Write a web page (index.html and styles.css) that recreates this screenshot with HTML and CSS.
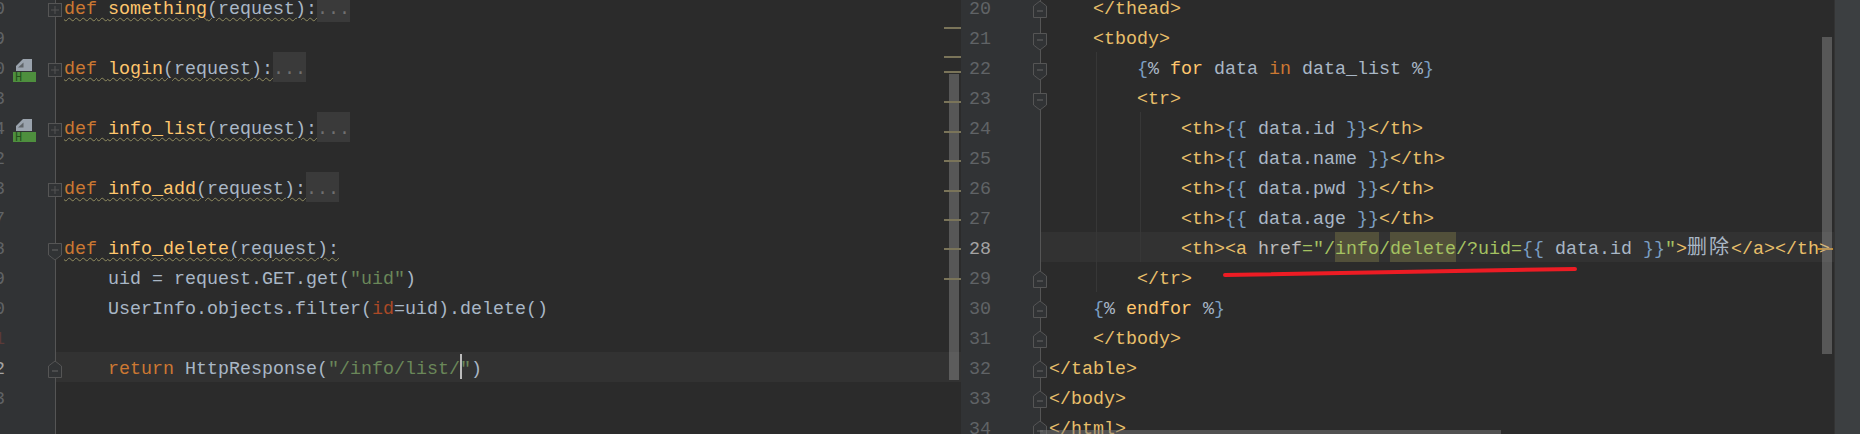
FILE: index.html
```html
<!DOCTYPE html>
<html lang="en">
<head>
<meta charset="utf-8">
<title>Editor</title>
<link rel="stylesheet" href="styles.css">
</head>
<body>
<div class="ide">
  <section class="pane pane-left">
    <div class="lines">
      <div class="row"><div class="gutter"><span class="num">0</span><svg class="fold fold-plus"><use href="#f-plus"/></svg></div><div class="code"><span class="warn"><i class="k">def</i> <i class="f">something</i>(request):</span><span class="dots">...</span></div></div>
      <div class="row"><div class="gutter"><span class="num">9</span></div><div class="code"></div></div>
      <div class="row"><div class="gutter"><span class="num">0</span><svg class="mark" viewBox="0 0 16 12"><path d="M7 0H16V12H0V7Z" fill="#9aa3ad"/><path d="M2 8.5L7.5 3.5V8.5Z" fill="#5f6468"/></svg><span class="badge">H</span><svg class="fold fold-plus"><use href="#f-plus"/></svg></div><div class="code"><span class="warn"><i class="k">def</i> <i class="f">login</i>(request):</span><span class="dots">...</span></div></div>
      <div class="row"><div class="gutter"><span class="num">3</span></div><div class="code"></div></div>
      <div class="row"><div class="gutter"><span class="num">4</span><svg class="mark" viewBox="0 0 16 12"><path d="M7 0H16V12H0V7Z" fill="#9aa3ad"/><path d="M2 8.5L7.5 3.5V8.5Z" fill="#5f6468"/></svg><span class="badge">H</span><svg class="fold fold-plus"><use href="#f-plus"/></svg></div><div class="code"><span class="warn"><i class="k">def</i> <i class="f">info_list</i>(request):</span><span class="dots">...</span></div></div>
      <div class="row"><div class="gutter"><span class="num">2</span></div><div class="code"></div></div>
      <div class="row"><div class="gutter"><span class="num">3</span><svg class="fold fold-plus"><use href="#f-plus"/></svg></div><div class="code"><span class="warn"><i class="k">def</i> <i class="f">info_add</i>(request):</span><span class="dots">...</span></div></div>
      <div class="row"><div class="gutter"><span class="num">7</span></div><div class="code"></div></div>
      <div class="row"><div class="gutter"><span class="num">8</span><svg class="fold fold-start"><use href="#f-start"/></svg></div><div class="code"><span class="warn"><i class="k">def</i> <i class="f">info_delete</i>(request):</span></div></div>
      <div class="row"><div class="gutter"><span class="num">9</span></div><div class="code">    uid = request.GET.get(<i class="s">"uid"</i>)</div></div>
      <div class="row"><div class="gutter"><span class="num">0</span></div><div class="code">    UserInfo.objects.filter(<i class="p">id</i>=uid).delete()</div></div>
      <div class="row"><div class="gutter"><span class="num num-bp">1</span></div><div class="code"></div></div>
      <div class="row row-current"><div class="gutter"><span class="num num-current">2</span><svg class="fold fold-end"><use href="#f-end"/></svg></div><div class="code">    <i class="k">return</i> HttpResponse(<i class="s">"/info/list/<b class="caret"></b>"</i>)</div></div>
      <div class="row"><div class="gutter"><span class="num">3</span></div><div class="code"></div></div>
      <div class="row"><div class="gutter"></div><div class="code"></div></div>
    </div>
    <div class="thumb thumb-left"></div>
    <div class="tick t1"></div><div class="tick t2"></div><div class="tick t3"></div><div class="tick t4"></div><div class="tick t5"></div><div class="tick t6"></div><div class="tick t7"></div><div class="tick t8"></div><div class="tick t9"></div><div class="tick t10"></div>
  </section>
  <section class="pane pane-right">
    <div class="lines">
      <div class="row"><div class="gutter"><span class="num">20</span><svg class="fold fold-end"><use href="#f-end"/></svg></div><div class="code">    <i class="t">&lt;/thead&gt;</i></div></div>
      <div class="row"><div class="gutter"><span class="num">21</span><svg class="fold fold-start"><use href="#f-start"/></svg></div><div class="code">    <i class="t">&lt;tbody&gt;</i></div></div>
      <div class="row"><div class="gutter"><span class="num">22</span><svg class="fold fold-start"><use href="#f-start"/></svg></div><div class="code">        <i class="b">{</i>% <i class="f">for</i> data <i class="k">in</i> data_list %<i class="b">}</i></div></div>
      <div class="row"><div class="gutter"><span class="num">23</span><svg class="fold fold-start"><use href="#f-start"/></svg></div><div class="code">        <i class="t">&lt;tr&gt;</i></div></div>
      <div class="row"><div class="gutter"><span class="num">24</span></div><div class="code">            <i class="t">&lt;th&gt;</i><i class="b">{{</i> data.id <i class="b">}}</i><i class="t">&lt;/th&gt;</i></div></div>
      <div class="row"><div class="gutter"><span class="num">25</span></div><div class="code">            <i class="t">&lt;th&gt;</i><i class="b">{{</i> data.name <i class="b">}}</i><i class="t">&lt;/th&gt;</i></div></div>
      <div class="row"><div class="gutter"><span class="num">26</span></div><div class="code">            <i class="t">&lt;th&gt;</i><i class="b">{{</i> data.pwd <i class="b">}}</i><i class="t">&lt;/th&gt;</i></div></div>
      <div class="row"><div class="gutter"><span class="num">27</span></div><div class="code">            <i class="t">&lt;th&gt;</i><i class="b">{{</i> data.age <i class="b">}}</i><i class="t">&lt;/th&gt;</i></div></div>
      <div class="row row-current"><div class="gutter"><span class="num num-current">28</span></div><div class="code">            <i class="t">&lt;th&gt;&lt;a</i> <i class="a">href</i><i class="v">="/<u>info</u>/<u>delete</u>/?uid=</i><i class="b">{{</i> data.id <i class="b">}}</i><i class="v">"</i><i class="t">&gt;</i><i class="cjk">删除</i><i class="t">&lt;/a&gt;&lt;/th&gt;</i></div></div>
      <div class="row"><div class="gutter"><span class="num">29</span><svg class="fold fold-end"><use href="#f-end"/></svg></div><div class="code">        <i class="t">&lt;/tr&gt;</i></div></div>
      <div class="row"><div class="gutter"><span class="num">30</span><svg class="fold fold-end"><use href="#f-end"/></svg></div><div class="code">    <i class="b">{</i>% <i class="f">endfor</i> %<i class="b">}</i></div></div>
      <div class="row"><div class="gutter"><span class="num">31</span><svg class="fold fold-end"><use href="#f-end"/></svg></div><div class="code">    <i class="t">&lt;/tbody&gt;</i></div></div>
      <div class="row"><div class="gutter"><span class="num">32</span><svg class="fold fold-end"><use href="#f-end"/></svg></div><div class="code"><i class="t">&lt;/table&gt;</i></div></div>
      <div class="row"><div class="gutter"><span class="num">33</span><svg class="fold fold-end"><use href="#f-end"/></svg></div><div class="code"><i class="t">&lt;/body&gt;</i></div></div>
      <div class="row"><div class="gutter"><span class="num">34</span><svg class="fold fold-end"><use href="#f-end"/></svg></div><div class="code"><i class="t">&lt;/html&gt;</i></div></div>
    </div>
    <div class="guide g1"></div>
    <div class="guide g2"></div>
    <div class="arrow"></div>
    <div class="thumb thumb-right"></div>
    <div class="hbar"></div>
    <svg class="redline" viewBox="0 0 356 12"><path d="M3 9L353 3" stroke="#ed1c24" stroke-width="4" stroke-linecap="round" fill="none"/></svg>
  </section>
  <aside class="strip"></aside>
</div>
<svg class="defs" width="0" height="0">
  <symbol id="f-plus" viewBox="0 0 14 14"><rect x=".5" y=".5" width="13" height="13" fill="#313335" stroke="#555"/><path d="M3 7H11M7 3V11" stroke="#555"/></symbol>
  <symbol id="f-start" viewBox="0 0 14 18"><path d="M.5 .5H13.5V12L7 17L.5 12Z" fill="#313335" stroke="#555"/><path d="M4 7H10" stroke="#666"/></symbol>
  <symbol id="f-end" viewBox="0 0 14 18"><path d="M.5 17.5H13.5V6L7 1L.5 6Z" fill="#313335" stroke="#555"/><path d="M4 11H10" stroke="#666"/></symbol>
</svg>
</body>
</html>
```
FILE: styles.css
```css
html, body { margin: 0; padding: 0; background: #2b2b2b; }
.ide { display: flex; width: 1860px; height: 434px; overflow: hidden; font-family: "Liberation Mono", "Noto Sans CJK SC", monospace; font-size: 18.33px; color: #a9b7c6; }
.pane { position: relative; overflow: hidden; height: 434px; }
.pane-left { width: 961px; flex: none; --gutter: 56px; }
.pane-right { flex: 1; --gutter: 80px; border-right: 1px solid #333; }
.strip { width: 25px; flex: none; background: #3c3f41; }
.lines { margin-top: -8px; }
.row { display: flex; height: 30px; line-height: 35px; }
.row-current { background: #323232; }
.gutter { position: relative; flex: none; width: var(--gutter); background: #313335; border-right: 1px solid #555; box-sizing: border-box; }
.code { flex: 1; padding-left: 8px; white-space: pre; }
.num { position: absolute; color: #606366; }
.pane-left .num { right: 50px; }
.pane-right .num { left: 8px; }
.num-current { color: #a4a3a3; }
.num-bp { color: #5a3a38; }
.fold { position: absolute; right: -7px; width: 14px; overflow: visible; }
.fold-plus { top: 11px; height: 14px; }
.fold-start { top: 11px; height: 18px; }
.fold-end { top: 8px; height: 18px; }
.mark { position: absolute; left: 16px; top: 7px; width: 16px; height: 12px; }
.badge { position: absolute; left: 13px; top: 20px; width: 23px; height: 11px; background: #4e8f3e; color: #24511c; font-size: 12px; line-height: 12px; padding-left: 2px; box-sizing: border-box; }
i { font-style: normal; }
.k { color: #cc7832; }
.f { color: #ffc66d; }
.s { color: #6a8759; }
.p { color: #aa4926; }
.t { color: #e8bf6a; }
.b { color: #7a9ec2; }
.a { color: #bababa; }
.v { color: #a5c261; }
.v u { text-decoration: none; background: #52503a; display: inline-block; height: 30px; vertical-align: top; }
.cjk { color: #a9b7c6; display: inline-block; width: 44px; font-size: 20px; line-height: 33px; height: 30px; vertical-align: top; letter-spacing: 2px; }
.warn { text-decoration: underline wavy #8f8a5f 1px; text-underline-offset: 3px; }
.dots { background: #3a3a3a; color: #707070; display: inline-block; height: 30px; vertical-align: top; }
.caret { display: inline-block; width: 2px; height: 25px; background: #bbb; vertical-align: top; margin: 2px -2px 0 0; }
.thumb { position: absolute; width: 10px; background: rgba(166, 166, 166, .36); }
.thumb-left { left: 949px; top: 74px; height: 306px; }
.thumb-right { left: 861px; top: 37px; height: 317px; }
.tick { position: absolute; left: 944px; width: 17px; height: 2px; background: #7a7459; }
.t1 { top: 27px; } .t2 { top: 56px; } .t3 { top: 71px; } .t4 { top: 101px; } .t5 { top: 131px; } .t6 { top: 160px; } .t7 { top: 190px; } .t8 { top: 219px; } .t9 { top: 248px; } .t10 { top: 278px; }
.guide { position: absolute; width: 1px; background: #373737; }
.g1 { left: 135px; top: 52px; height: 240px; }
.g2 { left: 179px; top: 112px; height: 150px; }
.arrow { position: absolute; left: 856px; top: 248px; width: 16px; height: 2px; background: #c08a2e; }
.hbar { position: absolute; left: 79px; bottom: 0; width: 461px; height: 4px; background: rgba(120, 120, 120, .5); }
.redline { position: absolute; left: 261px; top: 266px; width: 356px; height: 12px; }
.defs { position: absolute; }
```
